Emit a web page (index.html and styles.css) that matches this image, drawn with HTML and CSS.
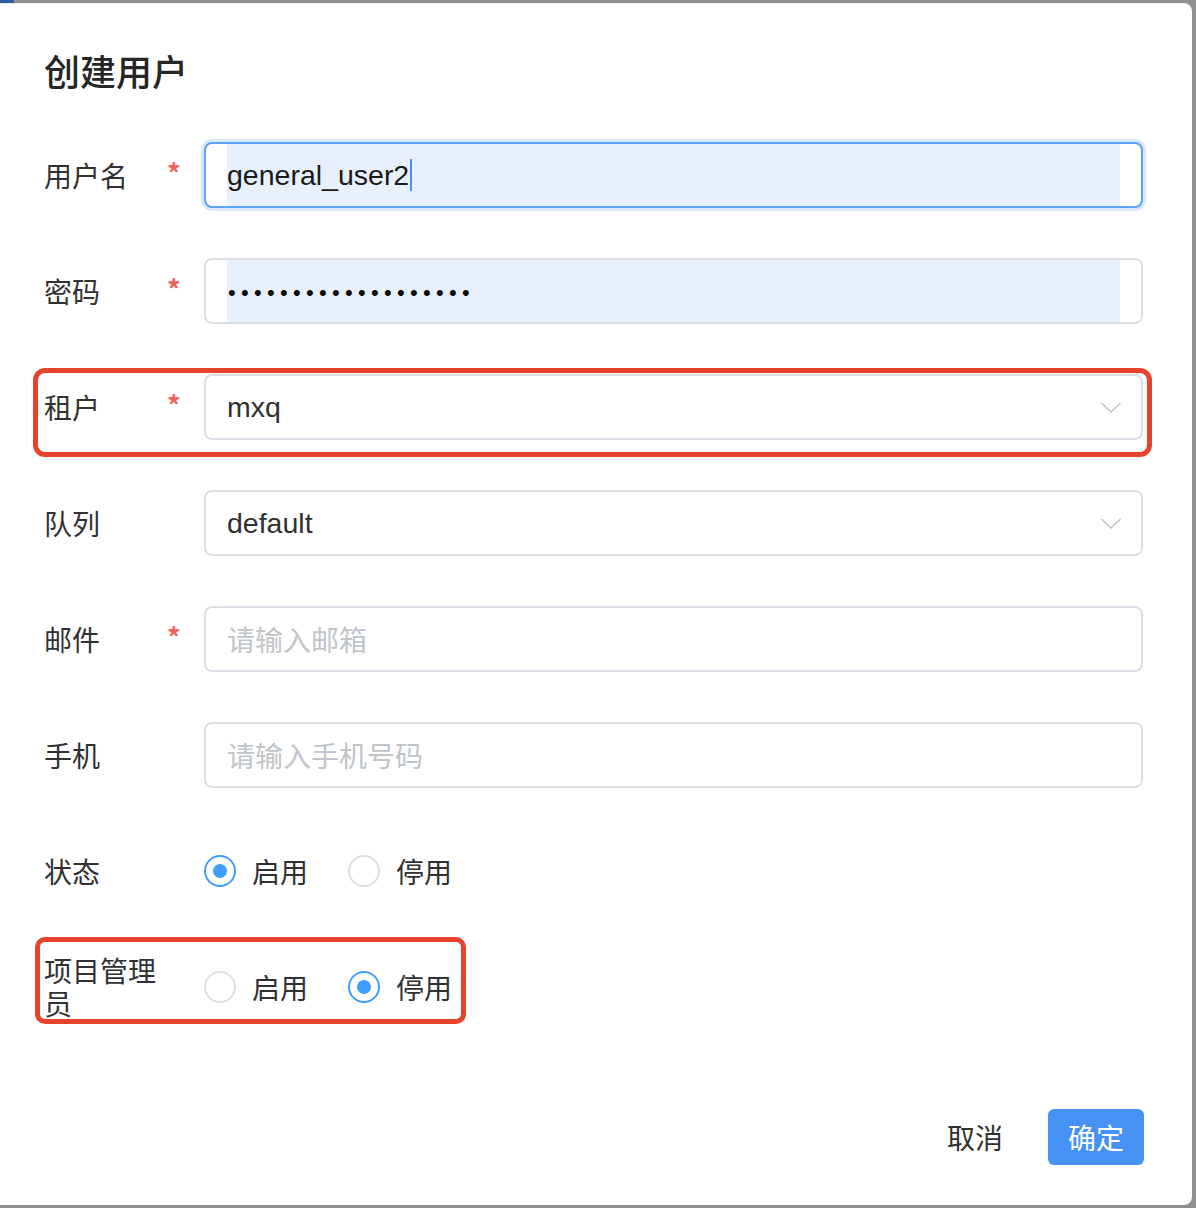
FILE: index.html
```html
<!DOCTYPE html>
<html lang="zh-CN">
<head>
<meta charset="utf-8">
<title>创建用户</title>
<link rel="stylesheet" href="styles.css">
</head>
<body>
<div class="topstrip"><span class="tab-blue"></span></div>
<div class="dialog">
  <h2 class="title">创建用户</h2>
  <div class="form">
    <div class="row">
      <div class="label">用户名</div>
      <div class="req">*</div>
      <div class="input focused"><span class="autofill">general_user2<span class="caret"></span></span></div>
    </div>
    <div class="row">
      <div class="label">密码</div>
      <div class="req">*</div>
      <div class="input"><span class="autofill"><span class="dots">•••••••••••••••••••</span></span></div>
    </div>
    <div class="row marked-a">
      <div class="label">租户</div>
      <div class="req">*</div>
      <div class="input select"><span class="value">mxq</span>
        <svg class="chev" width="22" height="14" viewBox="0 0 22 14"><polyline points="1.5,2 11,11 20.5,2" fill="none" stroke="#c0c4cc" stroke-width="1.6"/></svg>
      </div>
    </div>
    <div class="row">
      <div class="label">队列</div>
      <div class="req"></div>
      <div class="input select"><span class="value">default</span>
        <svg class="chev" width="22" height="14" viewBox="0 0 22 14"><polyline points="1.5,2 11,11 20.5,2" fill="none" stroke="#c0c4cc" stroke-width="1.6"/></svg>
      </div>
    </div>
    <div class="row">
      <div class="label">邮件</div>
      <div class="req">*</div>
      <div class="input"><span class="placeholder">请输入邮箱</span></div>
    </div>
    <div class="row">
      <div class="label">手机</div>
      <div class="req"></div>
      <div class="input"><span class="placeholder">请输入手机号码</span></div>
    </div>
    <div class="row">
      <div class="label">状态</div>
      <div class="req"></div>
      <div class="radios">
        <label class="radio"><span class="circle on"></span><span class="rtext">启用</span></label>
        <label class="radio"><span class="circle"></span><span class="rtext">停用</span></label>
      </div>
    </div>
    <div class="row marked-b">
      <div class="label wrap">项目管理员</div>
      <div class="req"></div>
      <div class="radios">
        <label class="radio"><span class="circle"></span><span class="rtext">启用</span></label>
        <label class="radio"><span class="circle on"></span><span class="rtext">停用</span></label>
      </div>
    </div>
  </div>
  <div class="footer">
    <button class="btn-text">取消</button>
    <button class="btn-primary">确定</button>
  </div>
</div>
</body>
</html>
```
FILE: styles.css
```css
html, body {
  margin: 0;
  padding: 0;
}
body {
  background: #8f8f8f;
  width: 1196px;
  height: 1208px;
  overflow: hidden;
  font-family: "Liberation Sans", "Noto Sans CJK SC", sans-serif;
  color: #303133;
}
.topstrip {
  height: 3px;
  display: flex;
}
.tab-blue {
  width: 14px;
  height: 3px;
  background: #2b5c9f;
}
.dialog {
  width: 1192px;
  height: 1202px;
  background: #fff;
  border-radius: 0 8px 8px 0;
  box-sizing: border-box;
  border-top: 1px solid #eceef3;
  padding: 0 49px 0 44px;
  display: flex;
  flex-direction: column;
}
.title {
  margin: 0;
  padding-top: 44px;
  height: 88px;
  box-sizing: border-box;
  font-family: "Noto Sans CJK SC", sans-serif;
  font-size: 36px;
  line-height: 44px;
  font-weight: 500;
  color: #262626;
}
.form {
  margin-top: 50px;
  display: flex;
  flex-direction: column;
  gap: 50px;
}
.row {
  display: grid;
  grid-template-columns: 120px 40px 1fr;
  align-items: center;
  height: 66px;
  position: relative;
}
.label {
  font-family: "Noto Sans CJK SC", sans-serif;
  font-size: 28px;
  line-height: 33px;
  color: #303133;
}
.label.wrap {
  width: 120px;
  word-break: break-all;
}
.req {
  color: #f25f5c;
  font-family: "Noto Sans CJK SC", sans-serif;
  font-size: 27px;
  font-weight: 700;
  line-height: 30px;
  padding-left: 3px;
  align-self: center;
  margin-top: -4px;
}
.input {
  height: 66px;
  box-sizing: border-box;
  border: 2px solid #dcdfe6;
  border-radius: 8px;
  padding: 0 21px;
  display: flex;
  align-items: center;
  font-size: 28.5px;
  color: #1a1a1a;
  background: #fff;
}
.input.focused {
  border-color: #5ea3f5;
  box-shadow: 0 0 0 3px #d9e8fc;
}
.autofill {
  background: #e8f0fe;
  align-self: stretch;
  flex: 1;
  display: flex;
  align-items: center;
}
.caret {
  display: inline-block;
  width: 2px;
  height: 32px;
  background: #4a90f2;
  margin-left: 1px;
}
.dots {
  font-size: 22px;
  letter-spacing: 5.3px;
  color: #000;
  margin-left: 1px;
  margin-top: 3px;
}
.select {
  justify-content: space-between;
  color: #303133;
}
.chev {
  margin-right: -2px;
  margin-top: 2px;
}
.placeholder {
  font-family: "Noto Sans CJK SC", sans-serif;
  color: #c0c4cc;
  font-size: 28px;
}
.radios {
  display: flex;
  align-items: center;
  gap: 40px;
}
.radio {
  display: flex;
  align-items: center;
  gap: 16px;
}
.circle {
  width: 32px;
  height: 32px;
  box-sizing: border-box;
  border: 2px solid #dcdfe6;
  border-radius: 50%;
  display: flex;
  align-items: center;
  justify-content: center;
}
.circle.on {
  border-color: #409eff;
}
.circle.on::after {
  content: "";
  width: 14px;
  height: 14px;
  border-radius: 50%;
  background: #409eff;
}
.rtext {
  font-family: "Noto Sans CJK SC", sans-serif;
  font-size: 28px;
  color: #303133;
}
.marked-a::after {
  content: "";
  position: absolute;
  top: -6px;
  left: -11px;
  right: -9px;
  bottom: -17px;
  border: 5px solid #e8422c;
  border-radius: 12px;
  pointer-events: none;
}
.marked-b::after {
  content: "";
  position: absolute;
  top: -17px;
  left: -9px;
  width: 431px;
  bottom: -4px;
  box-sizing: border-box;
  border: 5px solid #e8422c;
  border-radius: 10px;
  pointer-events: none;
}
.footer {
  margin-top: auto;
  margin-bottom: 40px;
  display: flex;
  justify-content: flex-end;
  align-items: center;
  gap: 45px;
  margin-right: -1px;
}
.btn-text {
  border: 0;
  background: none;
  padding: 0;
  font-family: "Noto Sans CJK SC", sans-serif;
  font-size: 28px;
  color: #303133;
}
.btn-primary {
  border: 0;
  width: 96px;
  height: 56px;
  border-radius: 6px;
  background: #4592f4;
  color: #fff;
  font-family: "Noto Sans CJK SC", sans-serif;
  font-size: 28px;
  padding: 0;
}
```
